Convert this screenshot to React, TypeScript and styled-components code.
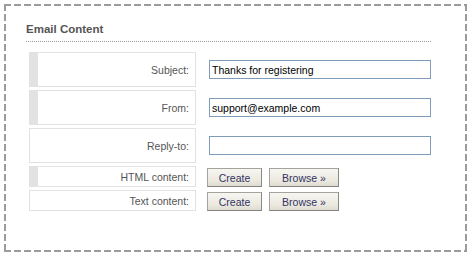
import React from 'react'
import styled, { createGlobalStyle } from 'styled-components'

const GlobalStyle = createGlobalStyle`
	html, body {
		margin: 0;
		padding: 0;
		background: #fff;
	}
	body {
		font-family: "Liberation Sans", Arial, sans-serif;
	}
`

type Field = {
	label: string
	kind: 'text' | 'file'
	value?: string
	marked?: boolean
}

const fields: Field[] = [
	{ label: 'Subject:', kind: 'text', value: 'Thanks for registering', marked: true },
	{ label: 'From:', kind: 'text', value: 'support@example.com', marked: true },
	{ label: 'Reply-to:', kind: 'text', value: '' },
	{ label: 'HTML content:', kind: 'file', marked: true },
	{ label: 'Text content:', kind: 'file' },
]

/**
 * Email content block of a settings form.
 */
const App: React.FC = () => {
	return (
		<>
			<GlobalStyle />
			<Panel>
				<Heading>Email Content</Heading>
				<FieldGrid>
					{fields.map((field) => (
						<React.Fragment key={field.label}>
							<LabelCell $tall={field.kind === 'text'} $marked={!!field.marked}>
								{field.label}
							</LabelCell>
							{field.kind === 'text' ? (
								<ValueCell>
									<TextInput defaultValue={field.value} />
								</ValueCell>
							) : (
								<ButtonCell>
									<SmallButton $width={55}>Create</SmallButton>
									<SmallButton $width={70}>Browse »</SmallButton>
								</ButtonCell>
							)}
						</React.Fragment>
					))}
				</FieldGrid>
			</Panel>
		</>
	)
}

const Panel = styled.div`
	box-sizing: border-box;
	width: 463px;
	height: 248px;
	margin: 4px 0 0 4px;
	padding: 18px 36px 0 22px;
	background:
		repeating-linear-gradient(90deg, #9b9b9b 0 7px, transparent 7px 10px) left top / 100% 2px no-repeat,
		repeating-linear-gradient(90deg, #9b9b9b 0 7px, transparent 7px 10px) left bottom / 100% 2px no-repeat,
		repeating-linear-gradient(180deg, #9b9b9b 0 7px, transparent 7px 10px) left top / 2px 100% no-repeat,
		repeating-linear-gradient(180deg, #9b9b9b 0 7px, transparent 7px 10px) right top / 2px 100% no-repeat,
		#fff;
`

const Heading = styled.h3`
	margin: 0;
	padding: 0 0 4px;
	font-size: 11.5px;
	line-height: 15px;
	font-weight: 700;
	color: #555;
	border-bottom: 1px dotted #9a9a9a;
`

const FieldGrid = styled.div`
	display: grid;
	grid-template-columns: 167px 1fr;
	column-gap: 4px;
	row-gap: 3px;
	margin: 10px 0 0 3px;
`

const LabelCell = styled.div<{ $tall: boolean; $marked: boolean }>`
	box-sizing: border-box;
	height: ${(props) => (props.$tall ? 35 : 21)}px;
	display: flex;
	align-items: center;
	justify-content: flex-end;
	padding-right: 6px;
	border: 1px solid #e2e2e2;
	border-left: ${(props) => (props.$marked ? 9 : 1)}px solid #e2e2e2;
	font-size: 10.5px;
	color: #555;
`

const ValueCell = styled.div`
	display: flex;
	align-items: center;
	padding-left: 9px;
`

const ButtonCell = styled.div`
	display: flex;
	align-items: flex-end;
	gap: 7px;
	padding-left: 7px;
`

const TextInput = styled.input`
	box-sizing: border-box;
	width: 222px;
	height: 19px;
	margin: 0;
	padding: 0 2px;
	border: 1px solid #7f9db9;
	font-family: "Liberation Sans", Arial, sans-serif;
	font-size: 10.5px;
	color: #000;
	outline: none;
`

const SmallButton = styled.button<{ $width: number }>`
	box-sizing: border-box;
	width: ${(props) => props.$width}px;
	height: 19px;
	margin: 0;
	padding: 0;
	border: 1px solid #a4a39c;
	border-right-color: #8a8983;
	border-bottom-color: #83827c;
	background: linear-gradient(#f7f6f1, #ebe9df 70%, #dedcd1);
	font-family: "Liberation Sans", Arial, sans-serif;
	font-size: 10.5px;
	color: #333366;
	cursor: pointer;
`

export default App
